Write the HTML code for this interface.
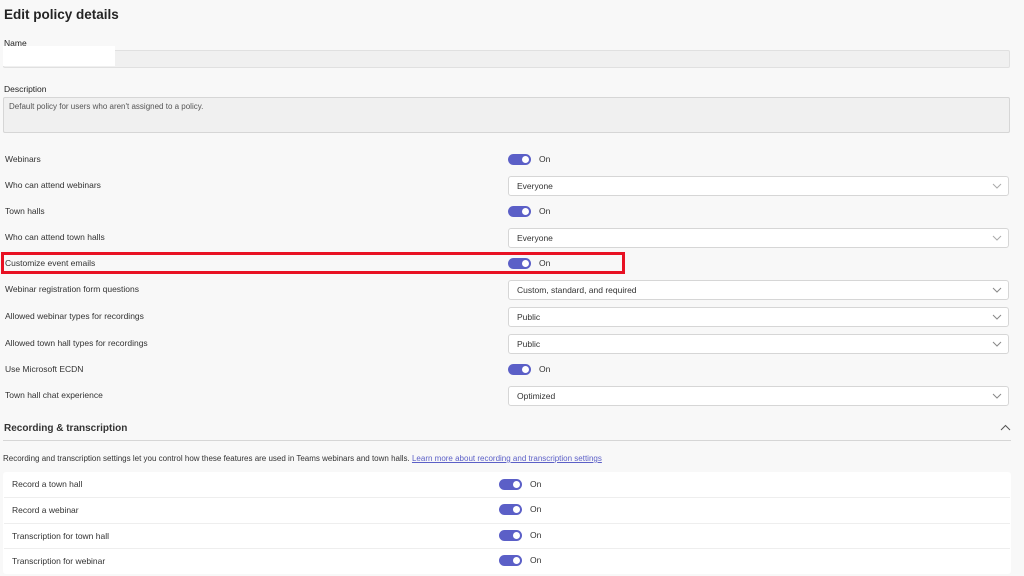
<!DOCTYPE html>
<html><head><style>
body{margin:0;width:1024px;height:576px;background:#f8f8f8;font-family:"Liberation Sans",sans-serif;color:#242424;position:relative;overflow:hidden}
.a{position:absolute;white-space:nowrap}
.l{font-size:8.5px;color:#333}
.tg{position:absolute;width:23px;height:11px;border-radius:6px;background:#5b5fc7}
.tg:after{content:"";position:absolute;right:2px;top:2px;width:7px;height:7px;border-radius:50%;background:#fff}
.on{position:absolute;font-size:8.5px;color:#333}
.dd{position:absolute;left:508px;width:499px;height:18px;background:#fff;border:1px solid #d6d6d6;border-radius:3px;font-size:8.5px;line-height:18px;text-indent:8px;color:#333}
.dd svg{position:absolute;right:6px;top:6px}
.row{position:absolute;left:4px;width:1006px;height:25px;border-top:1px solid #eee;font-size:8.5px;line-height:25px;text-indent:8px;color:#333}
</style></head><body>
<div class="a" style="left:4px;top:7px;font-size:13.5px;font-weight:bold">Edit policy details</div>
<div class="a" style="left:4px;top:38px;font-size:8.5px">Name</div>
<div class="a" style="left:3px;top:50px;width:1005px;height:16px;background:#f0f0f0;border:1px solid #e0e0e0;border-radius:2px"></div>
<div class="a" style="left:3px;top:46px;width:112px;height:20px;background:#fff"></div>
<div class="a" style="left:4px;top:84px;font-size:8.5px">Description</div>
<div class="a" style="left:3px;top:97px;width:1005px;height:34px;background:#f0f0f0;border:1px solid #d6d6d6;border-radius:2px"></div>
<div class="a" style="left:9px;top:102px;font-size:8px;color:#555">Default policy for users who aren't assigned to a policy.</div>

<div class="a l" style="left:5px;top:154px">Webinars</div>
<div class="tg" style="left:508px;top:154px"></div><div class="on" style="left:539px;top:154px">On</div>
<div class="a l" style="left:5px;top:180px">Who can attend webinars</div>
<div class="dd" style="top:176px">Everyone<svg width="10" height="6"><path d="M1 1l4 4 4-4" stroke="#aaa" fill="none"/></svg></div>
<div class="a l" style="left:5px;top:206px">Town halls</div>
<div class="tg" style="left:508px;top:206px"></div><div class="on" style="left:539px;top:206px">On</div>
<div class="a l" style="left:5px;top:232px">Who can attend town halls</div>
<div class="dd" style="top:228px">Everyone<svg width="10" height="6"><path d="M1 1l4 4 4-4" stroke="#aaa" fill="none"/></svg></div>
<div class="a" style="left:1px;top:252px;width:618px;height:16px;border:3px solid #e81123"></div>
<div class="a l" style="left:5px;top:258px">Customize event emails</div>
<div class="tg" style="left:508px;top:258px"></div><div class="on" style="left:539px;top:258px">On</div>
<div class="a l" style="left:5px;top:284px">Webinar registration form questions</div>
<div class="dd" style="top:280px">Custom, standard, and required<svg width="10" height="6"><path d="M1 1l4 4 4-4" stroke="#888" fill="none"/></svg></div>
<div class="a l" style="left:5px;top:311px">Allowed webinar types for recordings</div>
<div class="dd" style="top:307px">Public<svg width="10" height="6"><path d="M1 1l4 4 4-4" stroke="#888" fill="none"/></svg></div>
<div class="a l" style="left:5px;top:338px">Allowed town hall types for recordings</div>
<div class="dd" style="top:334px">Public<svg width="10" height="6"><path d="M1 1l4 4 4-4" stroke="#888" fill="none"/></svg></div>
<div class="a l" style="left:5px;top:364px">Use Microsoft ECDN</div>
<div class="tg" style="left:508px;top:364px"></div><div class="on" style="left:539px;top:364px">On</div>
<div class="a l" style="left:5px;top:390px">Town hall chat experience</div>
<div class="dd" style="top:386px">Optimized<svg width="10" height="6"><path d="M1 1l4 4 4-4" stroke="#888" fill="none"/></svg></div>

<div class="a" style="left:4px;top:423px;font-size:10px;font-weight:bold;color:#333">Recording &amp; transcription</div>
<svg class="a" style="left:1000px;top:424px" width="11" height="7"><path d="M1 6l4.5-4.5L10 6" stroke="#555" fill="none"/></svg>
<div class="a" style="left:3px;top:440px;width:1008px;height:1px;background:#d6d6d6"></div>
<div class="a" style="left:3px;top:454px;font-size:8px;color:#333">Recording and transcription settings let you control how these features are used in Teams webinars and town halls. <span style="color:#5b5fc7;text-decoration:underline">Learn more about recording and transcription settings</span></div>
<div class="a" style="left:3px;top:472px;width:1008px;height:102px;background:#fff;border-radius:3px"></div>
<div class="row" style="top:472px;border-top:none">Record a town hall</div>
<div class="row" style="top:497px">Record a webinar</div>
<div class="row" style="top:523px">Transcription for town hall</div>
<div class="row" style="top:548px">Transcription for webinar</div>
<div class="tg" style="left:499px;top:479px"></div><div class="on" style="left:530px;top:479px">On</div>
<div class="tg" style="left:499px;top:504px"></div><div class="on" style="left:530px;top:504px">On</div>
<div class="tg" style="left:499px;top:530px"></div><div class="on" style="left:530px;top:530px">On</div>
<div class="tg" style="left:499px;top:555px"></div><div class="on" style="left:530px;top:555px">On</div>
</body></html>
